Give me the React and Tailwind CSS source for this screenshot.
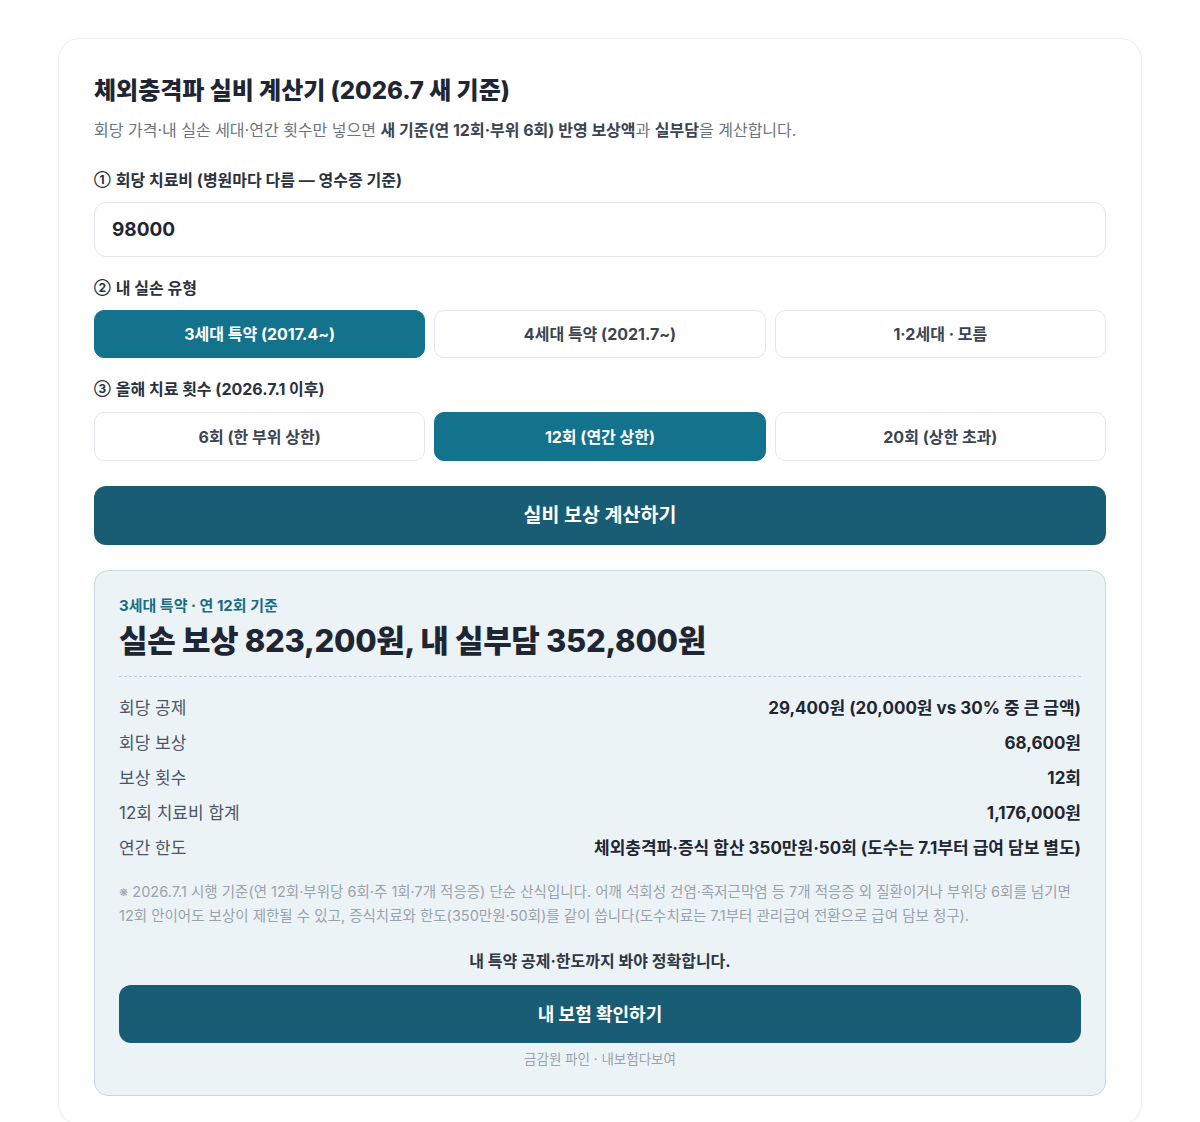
import { useState } from "react";

const FONT = { fontFamily: '"Inter", "Noto Sans CJK KR", sans-serif' };

const TYPES = ["3세대 특약 (2017.4~)", "4세대 특약 (2021.7~)", "1·2세대 · 모름"];
const COUNTS = ["6회 (한 부위 상한)", "12회 (연간 상한)", "20회 (상한 초과)"];

const ROWS = [
  ["회당 공제", "29,400원 (20,000원 vs 30% 중 큰 금액)"],
  ["회당 보상", "68,600원"],
  ["보상 횟수", "12회"],
  ["12회 치료비 합계", "1,176,000원"],
  ["연간 한도", "체외충격파·증식 합산 350만원·50회 (도수는 7.1부터 급여 담보 별도)"],
];

const Choice = ({ label, active, onClick, tall }) => (
  <button
    onClick={onClick}
    className={clsx(
      tall ? "h-[49px]" : "h-[48px]",
      "rounded-[10px] text-[16px] font-bold border",
      active ? "bg-[#13738d] text-white border-[#13738d]" : "bg-white text-[#3b4452] border-[#e4e7eb]"
    )}
  >
    {label}
  </button>
);

function clsx(...parts) {
  return parts.filter(Boolean).join(" ");
}

const Step = ({ n, children, className }) => (
  <div className={clsx("text-[16px] leading-5 font-bold text-[#2a3240] flex items-center", className)}>
    <span className="text-[12px] mr-[5px]">{n}</span>
    {children}
  </div>
);

const App = () => {
  const [price, setPrice] = useState("98000");
  const [type, setType] = useState(0);
  const [count, setCount] = useState(1);

  return (
    <div className="min-h-screen bg-white pt-[38px] px-[58px]" style={FONT}>
      <div className="rounded-[22px] border border-[#eceef1] shadow-[0_1px_6px_rgba(0,0,0,0.03)] bg-white px-[35px] pt-9 pb-[28px]">
        <h1 className="text-[24px] leading-8 font-extrabold text-[#1f2633]">
          체외충격파 실비 계산기 (2026.7 새 기준)
        </h1>
        <p className="mt-3 text-[16px] leading-[22px] text-[#6b7380]">
          회당 가격·내 실손 세대·연간 횟수만 넣으면{" "}
          <b className="font-bold text-[#3b4452]">새 기준(연 12회·부위 6회) 반영 보상액</b>과{" "}
          <b className="font-bold text-[#3b4452]">실부담</b>을 계산합니다.
        </p>

        <Step n="①" className="mt-[29px]">
          회당 치료비 (병원마다 다름 — 영수증 기준)
        </Step>
        <input
          value={price}
          onChange={(e) => setPrice(e.target.value)}
          className="mt-3 w-full h-[55px] rounded-[12px] border border-[#e3e6ea] px-[17px] text-[19px] font-bold text-[#1f2633] outline-none"
        />

        <Step n="②" className="mt-[21px]">
          내 실손 유형
        </Step>
        <div className="mt-3 grid grid-cols-3 gap-[9px]">
          {TYPES.map((t, i) => (
            <Choice key={t} label={t} active={type === i} onClick={() => setType(i)} />
          ))}
        </div>

        <Step n="③" className="mt-[21px]">
          올해 치료 횟수 (2026.7.1 이후)
        </Step>
        <div className="mt-[13px] grid grid-cols-3 gap-[9px]">
          {COUNTS.map((c, i) => (
            <Choice key={c} label={c} tall active={count === i} onClick={() => setCount(i)} />
          ))}
        </div>

        <button className="mt-[25px] w-full h-[59px] rounded-[12px] bg-[#185d74] text-[19.5px] font-bold text-white">
          실비 보상 계산하기
        </button>

        <div className="mt-[25px] rounded-[14px] border border-[#c4dae2] bg-[#ecf3f6] px-[24px] pt-[25px] pb-[27px]">
          <div className="text-[15px] leading-5 font-bold text-[#1a6b82]">3세대 특약 · 연 12회 기준</div>
          <div className="mt-[6px] text-[31px] leading-[38px] font-extrabold tracking-[-0.01em] text-[#1f2633]">
            실손 보상 823,200원, 내 실부담 352,800원
          </div>
          <div className="mt-4 border-t border-dashed border-[#b9c7cf]" />

          <div className="mt-[19px] flex flex-col gap-[11px]">
            {ROWS.map(([k, v]) => (
              <div key={k} className="flex justify-between text-[17px] leading-6">
                <span className="text-[#4b5563]">{k}</span>
                <span className="font-bold text-[#1f2633]">{v}</span>
              </div>
            ))}
          </div>

          <p className="mt-5 text-[14.5px] leading-6 text-[#9aa2ad]">
            ※ 2026.7.1 시행 기준(연 12회·부위당 6회·주 1회·7개 적응증) 단순 산식입니다. 어깨 석회성 건염·족저근막염 등 7개 적응증 외 질환이거나 부위당 6회를 넘기면
            12회 안이어도 보상이 제한될 수 있고, 증식치료와 한도(350만원·50회)를 같이 씁니다(도수치료는 7.1부터 관리급여 전환으로 급여 담보 청구).
          </p>

          <div className="mt-[22px] text-center text-[16px] leading-[22px] font-bold text-[#2f3744]">
            내 특약 공제·한도까지 봐야 정확합니다.
          </div>
          <button className="mt-[13px] w-full h-[58px] rounded-[12px] bg-[#185d74] text-[18px] font-bold text-white">
            내 보험 확인하기
          </button>
          <div className="mt-[7px] text-center text-[13.5px] leading-[18px] text-[#9aa2ad]">
            금감원 파인 · 내보험다보여
          </div>
        </div>
      </div>
    </div>
  );
};

export default App;
